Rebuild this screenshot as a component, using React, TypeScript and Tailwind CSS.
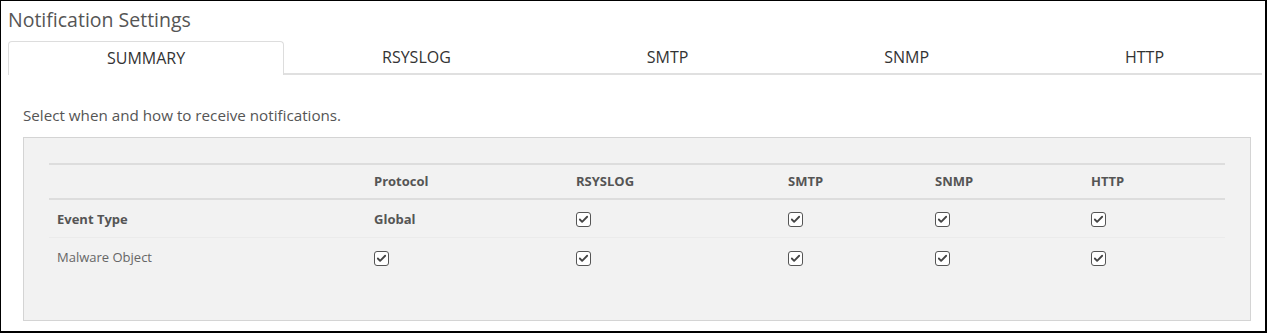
import { Check } from 'lucide-react'

const tabs = ['SUMMARY', 'RSYSLOG', 'SMTP', 'SNMP', 'HTTP']
const protocols = ['RSYSLOG', 'SMTP', 'SNMP', 'HTTP']

function Box() {
  return (
    <span className="inline-flex w-[15px] h-[15px] items-center justify-center rounded-[3px] border border-[#555] bg-white">
      <Check className="w-[11px] h-[11px] text-[#444]" strokeWidth={4} />
    </span>
  )
}

const cols = 'grid grid-cols-[317px_202px_212px_147px_156px_1fr] items-center'

export default function App() {
  return (
    <div className="w-[1267px] h-[333px] border-l border-t border-r-2 border-b-2 border-black bg-white font-['Open_Sans',sans-serif] pl-[7px] pr-[3px] overflow-hidden">
      <h1 className="pt-[6px] text-[19.5px] leading-[25px] text-[#555]">Notification Settings</h1>

      <div className="mt-[9px] flex h-[34px]">
        {tabs.map((t, i) => (
          <div
            key={t}
            className={
              'flex-auto flex items-center justify-center pb-[1px] text-[16px] text-[#333] ' +
              (i === 0 ? 'border border-b-0 border-[#ddd] rounded-t-[4px] bg-white' : 'border-b-2 border-[#e0e0e0]')
            }
          >
            {t}
          </div>
        ))}
      </div>

      <p className="mt-[30px] pl-[15px] text-[15.2px] leading-[20px] text-[#555]">Select when and how to receive notifications.</p>

      <div className="mt-[12px] ml-[15px] mr-[11px] h-[184px] border border-[#d4d4d4] bg-[#f2f2f2] pt-[25px] pl-[25px] pr-[25px] text-[13px] text-[#555]">
        <div className="border-t-2 border-[#ddd]">
          <div className={cols + ' h-[35px] font-bold border-b-2 border-[#ddd]'}>
            <div />
            <div className="pl-[8px]">Protocol</div>
            {protocols.map(p => (
              <div key={p} className="pl-[8px]">{p}</div>
            ))}
          </div>
          <div className={cols + ' h-[38px] pt-[2px] border-b border-[#ebebeb]'}>
            <div className="pl-[8px] font-bold">Event Type</div>
            <div className="pl-[8px] font-bold">Global</div>
            {protocols.map(p => (
              <div key={p} className="pl-[8px] flex"><Box /></div>
            ))}
          </div>
          <div className={cols + ' h-[38px] pt-[2px]'}>
            <div className="pl-[8px] text-[#666]">Malware Object</div>
            <div className="pl-[8px] flex"><Box /></div>
            {protocols.map(p => (
              <div key={p} className="pl-[8px] flex"><Box /></div>
            ))}
          </div>
        </div>
      </div>
    </div>
  )
}
